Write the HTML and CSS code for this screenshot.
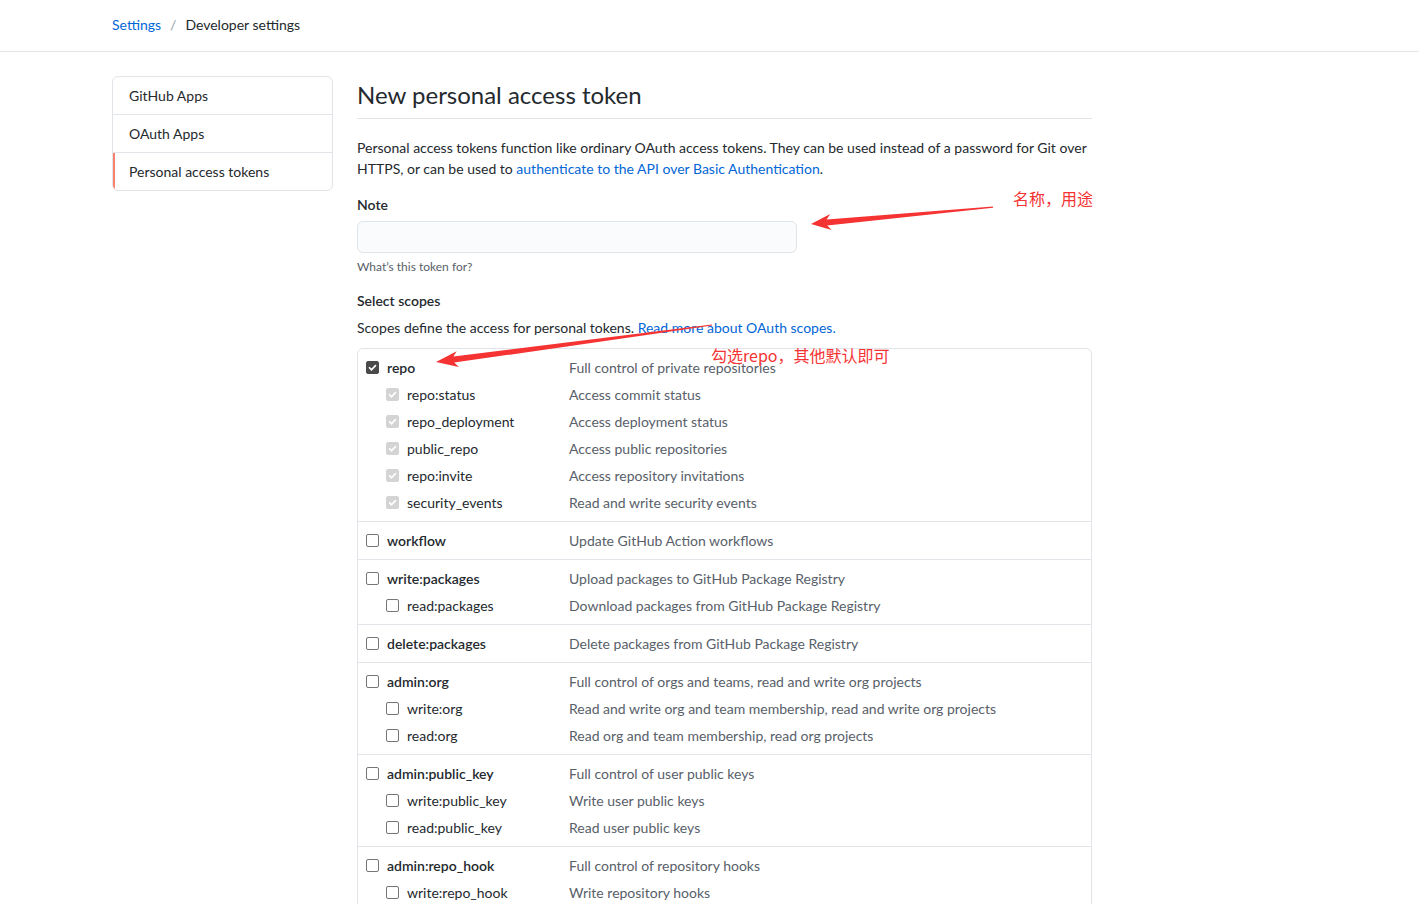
FILE: index.html
```html
<!DOCTYPE html>
<html lang="en">
<head>
<meta charset="utf-8">
<title>New personal access token</title>
<link rel="stylesheet" href="styles.css">
</head>
<body>
<header class="crumbs">
  <nav class="crumbs-inner">
    <a class="link" href="#">Settings</a>
    <span class="sep">/</span>
    <span class="current">Developer settings</span>
  </nav>
</header>

<div class="layout">
  <aside class="menu">
    <a class="menu-item" href="#">GitHub Apps</a>
    <a class="menu-item" href="#">OAuth Apps</a>
    <a class="menu-item selected" href="#">Personal access tokens</a>
  </aside>

  <main class="main">
    <h1 class="subhead">New personal access token</h1>
    <p class="intro">Personal access tokens function like ordinary OAuth access tokens. They can be used instead of a password for Git over HTTPS, or can be used to <a class="link" href="#">authenticate to the API over Basic Authentication</a>.</p>

    <div class="field">
      <label class="field-label">Note</label>
      <input class="input" type="text">
      <p class="note">What’s this token for?</p>
    </div>

    <div class="field scopes-field">
      <div class="field-label">Select scopes</div>
      <p class="scopes-desc">Scopes define the access for personal tokens. <a class="link" href="#">Read more about OAuth scopes.</a></p>
    </div>

    <div class="scopes">
      <div class="group">
        <div class="row top"><span class="cb checked"><svg viewBox="0 0 13 13"><path d="M3 6.8l2.4 2.4L10 4.3" /></svg></span><span class="name">repo</span><span class="desc">Full control of private repositories</span></div>
        <div class="row sub"><span class="cb disabled"><svg viewBox="0 0 13 13"><path d="M3 6.8l2.4 2.4L10 4.3" /></svg></span><span class="name">repo:status</span><span class="desc">Access commit status</span></div>
        <div class="row sub"><span class="cb disabled"><svg viewBox="0 0 13 13"><path d="M3 6.8l2.4 2.4L10 4.3" /></svg></span><span class="name">repo_deployment</span><span class="desc">Access deployment status</span></div>
        <div class="row sub"><span class="cb disabled"><svg viewBox="0 0 13 13"><path d="M3 6.8l2.4 2.4L10 4.3" /></svg></span><span class="name">public_repo</span><span class="desc">Access public repositories</span></div>
        <div class="row sub"><span class="cb disabled"><svg viewBox="0 0 13 13"><path d="M3 6.8l2.4 2.4L10 4.3" /></svg></span><span class="name">repo:invite</span><span class="desc">Access repository invitations</span></div>
        <div class="row sub"><span class="cb disabled"><svg viewBox="0 0 13 13"><path d="M3 6.8l2.4 2.4L10 4.3" /></svg></span><span class="name">security_events</span><span class="desc">Read and write security events</span></div>
      </div>
      <div class="group">
        <div class="row top"><span class="cb"></span><span class="name">workflow</span><span class="desc">Update GitHub Action workflows</span></div>
      </div>
      <div class="group">
        <div class="row top"><span class="cb"></span><span class="name">write:packages</span><span class="desc">Upload packages to GitHub Package Registry</span></div>
        <div class="row sub"><span class="cb"></span><span class="name">read:packages</span><span class="desc">Download packages from GitHub Package Registry</span></div>
      </div>
      <div class="group">
        <div class="row top"><span class="cb"></span><span class="name">delete:packages</span><span class="desc">Delete packages from GitHub Package Registry</span></div>
      </div>
      <div class="group">
        <div class="row top"><span class="cb"></span><span class="name">admin:org</span><span class="desc">Full control of orgs and teams, read and write org projects</span></div>
        <div class="row sub"><span class="cb"></span><span class="name">write:org</span><span class="desc">Read and write org and team membership, read and write org projects</span></div>
        <div class="row sub"><span class="cb"></span><span class="name">read:org</span><span class="desc">Read org and team membership, read org projects</span></div>
      </div>
      <div class="group">
        <div class="row top"><span class="cb"></span><span class="name">admin:public_key</span><span class="desc">Full control of user public keys</span></div>
        <div class="row sub"><span class="cb"></span><span class="name">write:public_key</span><span class="desc">Write user public keys</span></div>
        <div class="row sub"><span class="cb"></span><span class="name">read:public_key</span><span class="desc">Read user public keys</span></div>
      </div>
      <div class="group">
        <div class="row top"><span class="cb"></span><span class="name">admin:repo_hook</span><span class="desc">Full control of repository hooks</span></div>
        <div class="row sub"><span class="cb"></span><span class="name">write:repo_hook</span><span class="desc">Write repository hooks</span></div>
        <div class="row sub"><span class="cb"></span><span class="name">read:repo_hook</span><span class="desc">Read repository hooks</span></div>
      </div>
    </div>
  </main>
</div>

<div class="annotations">
  <svg class="arrows" width="1419" height="904" viewBox="0 0 1419 904">
    <polygon points="811,224 830.2,214.1 826.6,219.5 992.95,206.5 993.05,207.7 827.2,225.5 831.6,230.1" />
    <polygon points="436,362 456.7,351.2 453.4,356.6 711.9,324.4 712.1,325.6 454.2,362.6 458.9,367" />
  </svg>
  <span class="anno anno-name">名称，用途</span>
  <span class="anno anno-repo">勾选repo，其他默认即可</span>
</div>
</body>
</html>
```

FILE: styles.css
```css
* { box-sizing: border-box; }

body {
  margin: 0;
  font-family: "Segoe UI", Lato, "Noto Sans", "Noto Sans CJK SC", sans-serif;
  font-size: 14px;
  line-height: 1.5;
  color: #24292e;
  background: #fff;
}

.link { color: #0366d6; text-decoration: none; }

.crumbs {
  height: 52px;
  border-bottom: 1px solid #e1e4e8;
}
.crumbs-inner {
  display: flex;
  align-items: center;
  height: 48px;
  padding-left: 112px;
  gap: 9px;
}
.crumbs-inner .sep { color: #959da5; }

.layout {
  display: flex;
  gap: 24px;
  padding: 24px 0 0 112px;
}

.menu {
  width: 221px;
  flex: none;
  align-self: flex-start;
  display: flex;
  flex-direction: column;
  border: 1px solid #e1e4e8;
  border-radius: 6px;
  overflow: hidden;
}
.menu-item {
  position: relative;
  display: flex;
  align-items: center;
  height: 38px;
  padding: 0 16px;
  color: #24292e;
  text-decoration: none;
  border-top: 1px solid #e1e4e8;
}
.menu-item:first-child { border-top: 0; height: 37px; }
.menu-item.selected::before {
  content: "";
  position: absolute;
  left: 0; top: 0; bottom: 0;
  width: 2px;
  background: #f9826c;
}

.main {
  width: 735px;
  flex: none;
  padding-top: 4px;
}

.subhead {
  margin: 0;
  font-size: 24px;
  font-weight: 400;
  line-height: 30px;
  padding-bottom: 8px;
  border-bottom: 1px solid #e1e4e8;
}

.intro {
  margin: 18px 0 0;
  line-height: 21px;
}

.field { margin-top: 15px; }
.field-label {
  display: block;
  font-weight: 600;
  line-height: 21px;
}
.input {
  display: block;
  width: 440px;
  height: 32px;
  margin-top: 6px;
  border: 1px solid #e1e4e8;
  border-radius: 6px;
  background: #fafbfc;
  font: inherit;
}
.note {
  margin: 5px 0 0;
  font-size: 12px;
  line-height: 18px;
  color: #586069;
}

.scopes-field { margin-top: 14px; }
.scopes-desc {
  margin: 6px 0 0;
  line-height: 21px;
}

.scopes {
  margin-top: 10px;
  border: 1px solid #e1e4e8;
  border-radius: 6px;
}
.group {
  padding: 5px 0 5px;
  border-top: 1px solid #e1e4e8;
}
.group:first-child { border-top: 0; padding-top: 5px; }

.row {
  display: grid;
  grid-template-columns: 13px 1fr 522px;
  align-items: center;
  height: 27px;
  padding-left: 8px;
}
.row.sub { padding-left: 28px; }
.row .name { padding-left: 8px; }
.row.top .name { font-weight: 600; }
.desc { color: #586069; }

.cb {
  width: 13px;
  height: 13px;
  border: 1px solid #767676;
  border-radius: 2px;
  background: #fff;
  display: flex;
}
.cb svg { width: 100%; height: 100%; }
.cb path { fill: none; stroke: #fff; stroke-width: 2; stroke-linecap: round; stroke-linejoin: round; }
.cb.checked { background: #4a4a4a; border-color: #4a4a4a; }
.cb.disabled { background: #d4d4d4; border-color: #d4d4d4; }

.annotations {
  position: absolute;
  left: 0; top: 0;
  width: 1419px;
  height: 904px;
  pointer-events: none;
}
.arrows { position: absolute; left: 0; top: 0; }
.arrows polygon { fill: #f53333; }
.anno {
  position: absolute;
  font-family: "Noto Sans CJK SC", sans-serif;
  font-size: 16px;
  line-height: 20px;
  color: #f53333;
  white-space: nowrap;
}
.anno-name { left: 1013px; top: 188px; }
.anno-repo { left: 711px; top: 345px; }
```
